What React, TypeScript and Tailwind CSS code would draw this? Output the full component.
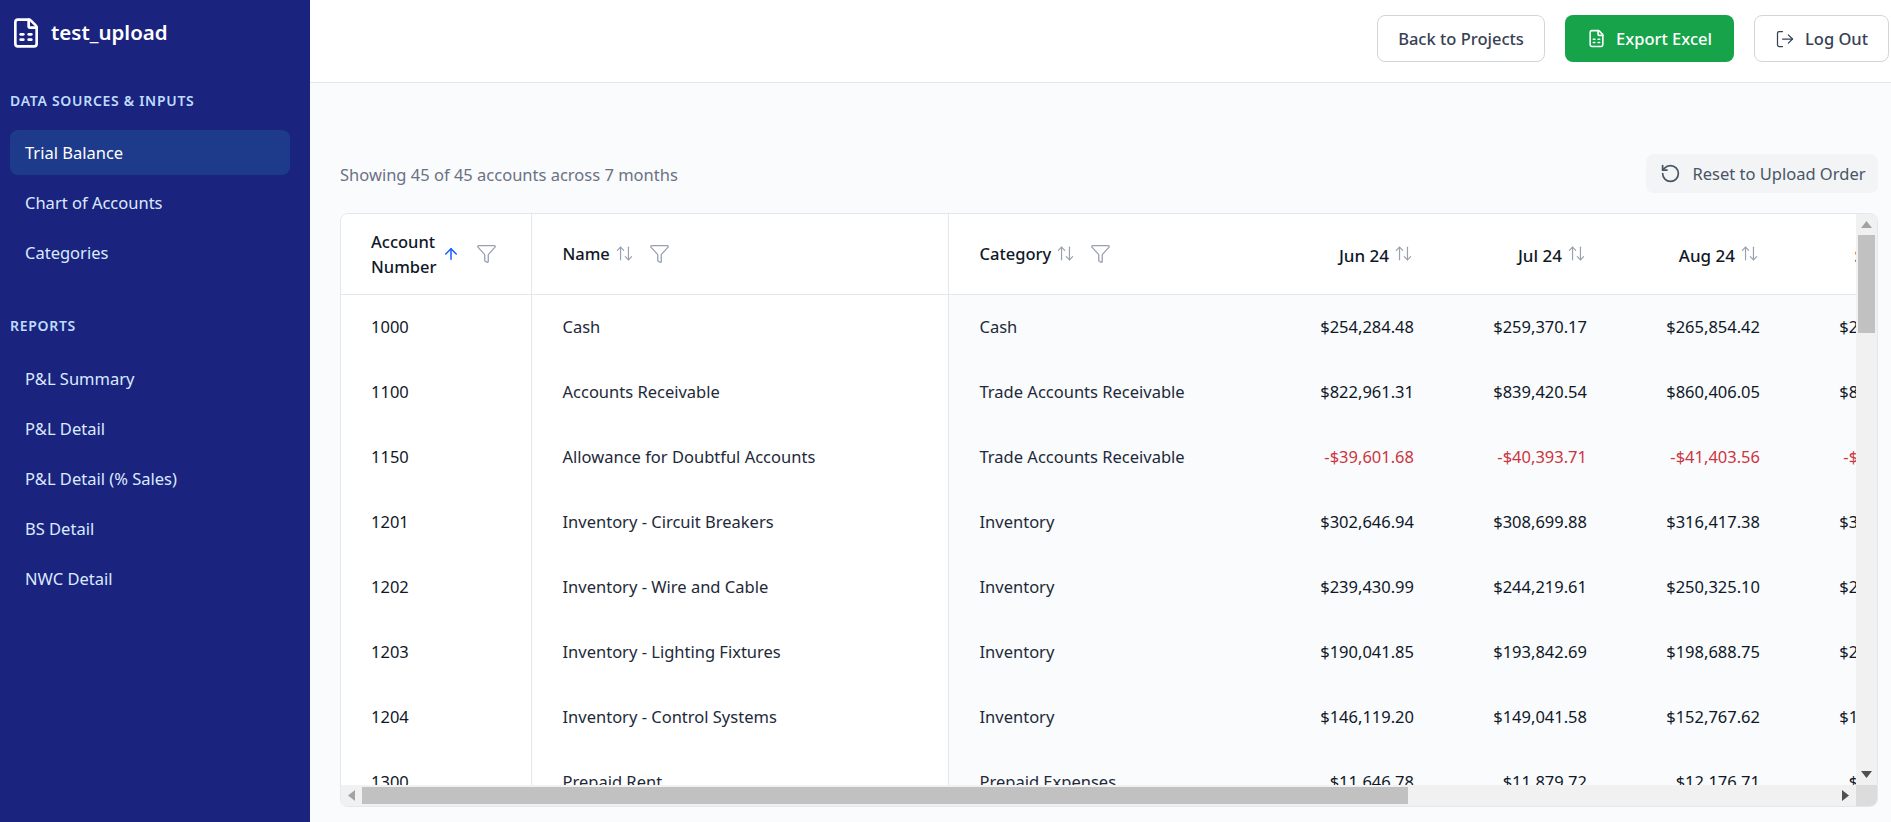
import { ArrowUp, ArrowUpDown, FileSpreadsheet, Filter, LogOut, RotateCcw } from "lucide-react";

const inputs = ["Trial Balance", "Chart of Accounts", "Categories"];
const reports = ["P&L Summary", "P&L Detail", "P&L Detail (% Sales)", "BS Detail", "NWC Detail"];

const rows = [
  ["1000", "Cash", "Cash", "$254,284.48", "$259,370.17", "$265,854.42", "$271,171.51"],
  ["1100", "Accounts Receivable", "Trade Accounts Receivable", "$822,961.31", "$839,420.54", "$860,406.05", "$877,614.17"],
  ["1150", "Allowance for Doubtful Accounts", "Trade Accounts Receivable", "-$39,601.68", "-$40,393.71", "-$41,403.56", "-$42,231.63"],
  ["1201", "Inventory - Circuit Breakers", "Inventory", "$302,646.94", "$308,699.88", "$316,417.38", "$322,745.73"],
  ["1202", "Inventory - Wire and Cable", "Inventory", "$239,430.99", "$244,219.61", "$250,325.10", "$255,331.60"],
  ["1203", "Inventory - Lighting Fixtures", "Inventory", "$190,041.85", "$193,842.69", "$198,688.75", "$202,662.53"],
  ["1204", "Inventory - Control Systems", "Inventory", "$146,119.20", "$149,041.58", "$152,767.62", "$155,822.97"],
  ["1300", "Prepaid Rent", "Prepaid Expenses", "$11,646.78", "$11,879.72", "$12,176.71", "$12,420.24"],
];

const NavItem = ({ label, active }: { label: string; active?: boolean }) => (
  <div className={`flex h-[45px] items-center rounded-lg pl-[15px] pt-[2px] text-[16.5px] ${active ? "bg-[#1e3a8a] text-white" : "text-[#dbeafe]"}`}>
    {label}
  </div>
);

const SortIcon = () => <ArrowUpDown className="h-[19px] w-[19px] shrink-0 text-gray-400" strokeWidth={1.5} />;
const FilterIcon = () => <Filter className="h-[21px] w-[21px] shrink-0 text-gray-400" strokeWidth={1.5} />;

const MonthHead = ({ label }: { label: string }) => (
  <th className="pr-[31px] font-medium">
    <div className="flex items-center justify-end gap-[5px]">
      <span className="pt-[3px] text-[17px]">{label}</span>
      <SortIcon />
    </div>
  </th>
);

export default function App() {
  return (
    <div className="flex h-[822px] w-[1891px] overflow-hidden bg-[#f9fbfd] font-['Noto_Sans',sans-serif]">
      <aside className="flex w-[310px] shrink-0 flex-col bg-[#1a237e] px-[10px]">
        <div className="flex h-[66px] items-center gap-[9px] text-white">
          <FileSpreadsheet className="h-8 w-8" strokeWidth={2} />
          <span className="pb-[2px] text-[20.5px] font-semibold">test_upload</span>
        </div>
        <div className="mt-[24px] text-[14px] font-semibold tracking-[0.7px] text-[#bfdbfe]">DATA SOURCES &amp; INPUTS</div>
        <nav className="mt-[19px] flex w-[280px] flex-col gap-[5px]">
          {inputs.map((item, i) => (
            <NavItem key={item} label={item} active={i === 0} />
          ))}
        </nav>
        <div className="mt-[40px] text-[14px] font-semibold tracking-[0.7px] text-[#bfdbfe]">REPORTS</div>
        <nav className="mt-[20px] flex w-[280px] flex-col gap-[5px]">
          {reports.map((item) => (
            <NavItem key={item} label={item} />
          ))}
        </nav>
      </aside>

      <main className="flex min-w-0 flex-1 flex-col">
        <header className="flex h-[83px] shrink-0 items-start justify-end gap-[20px] border-b border-gray-200 bg-white pr-[2px] pt-[15px]">
          <button className="h-[47px] w-[168px] rounded-lg border border-gray-300 bg-white pt-[2px] text-[16.5px] font-medium text-gray-700">
            Back to Projects
          </button>
          <button className="flex h-[47px] w-[169px] items-center justify-center gap-[10px] rounded-lg bg-[#16a34a] text-[16.5px] font-medium text-white">
            <FileSpreadsheet className="h-[19px] w-[19px]" />
            <span className="pt-[2px]">Export Excel</span>
          </button>
          <button className="flex h-[47px] w-[135px] items-center justify-center gap-[10px] rounded-lg border border-gray-300 bg-white text-[16.5px] font-medium text-gray-700">
            <LogOut className="h-5 w-5" strokeWidth={1.5} />
            <span className="pt-[2px]">Log Out</span>
          </button>
        </header>

        <section className="flex min-h-0 flex-1 flex-col pl-[30px] pr-[13px] pt-[71px]">
          <div className="flex h-[39px] items-center justify-between">
            <p className="pt-[3px] text-[16.5px] text-gray-500">Showing 45 of 45 accounts across 7 months</p>
            <button className="flex h-[39px] w-[232px] items-center justify-center gap-[11px] rounded-lg bg-gray-100 pl-[2px] text-[16.5px] text-gray-600">
              <RotateCcw className="h-[21px] w-[21px]" strokeWidth={2} />
              <span className="pt-[2px]">Reset to Upload Order</span>
            </button>
          </div>

          <div className="mt-[20px] grid h-[594px] grid-cols-[1fr_21px] grid-rows-[1fr_21px] overflow-hidden rounded-lg border border-gray-200 bg-white">
            <div className="min-h-0 min-w-0 overflow-hidden">
              <table className="w-[1622px] table-fixed border-collapse text-left text-[16.5px] text-gray-900">
                <colgroup>
                  <col className="w-[190px]" />
                  <col className="w-[417px]" />
                  <col className="w-[323px]" />
                  <col className="w-[173px]" />
                  <col className="w-[173px]" />
                  <col className="w-[173px]" />
                  <col className="w-[173px]" />
                </colgroup>
                <thead>
                  <tr className="h-[80px] border-b border-gray-200 bg-white">
                    <th className="border-r border-gray-200 pl-[30px] font-medium">
                      <div className="flex items-center">
                        <span className="leading-[25px]">Account<br />Number</span>
                        <ArrowUp className="ml-[6px] h-[18px] w-[18px] text-blue-600" strokeWidth={2} />
                        <span className="ml-[16px]"><FilterIcon /></span>
                      </div>
                    </th>
                    <th className="border-r border-gray-200 pl-[31px] font-medium">
                      <div className="flex items-center gap-[5px]">
                        <span className="pt-[2px]">Name</span>
                        <SortIcon />
                        <span className="ml-[10px]"><FilterIcon /></span>
                      </div>
                    </th>
                    <th className="pl-[31px] font-medium">
                      <div className="flex items-center gap-[5px]">
                        <span className="pt-[2px]">Category</span>
                        <SortIcon />
                        <span className="ml-[10px]"><FilterIcon /></span>
                      </div>
                    </th>
                    <MonthHead label="Jun 24" />
                    <MonthHead label="Jul 24" />
                    <MonthHead label="Aug 24" />
                    <MonthHead label="Sep 24" />
                  </tr>
                </thead>
                <tbody>
                  {rows.map((row) => (
                    <tr key={row[0]} className="h-[65px]">
                      <td className="border-r border-gray-200 bg-white pl-[30px] pt-[2px]">{row[0]}</td>
                      <td className="border-r border-gray-200 bg-white pl-[31px] pt-[2px] text-gray-800">{row[1]}</td>
                      <td className="bg-[#f9fbfd] pl-[31px] pt-[2px] text-gray-800">{row[2]}</td>
                      {row.slice(3).map((value, i) => (
                        <td key={i} className={`bg-[#f9fbfd] pr-[30px] pt-[2px] text-right ${value.startsWith("-") ? "text-[#cc3540]" : ""}`}>
                          {value}
                        </td>
                      ))}
                    </tr>
                  ))}
                </tbody>
              </table>
            </div>

            <div className="flex flex-col items-center bg-[#f1f1f1]">
              <div className="flex h-[21px] items-center justify-center">
                <svg width="11" height="7" viewBox="0 0 11 7"><path d="M5.5 0 11 7H0z" fill="#a3a3a3" /></svg>
              </div>
              <div className="min-h-0 flex-1">
                <div className="h-[98px] w-[17px] bg-[#c1c1c1]" />
              </div>
              <div className="flex h-[21px] items-center justify-center">
                <svg width="11" height="7" viewBox="0 0 11 7"><path d="M0 0h11L5.5 7z" fill="#505050" /></svg>
              </div>
            </div>

            <div className="flex items-center bg-[#f1f1f1]">
              <div className="flex h-full w-[21px] shrink-0 items-center justify-center">
                <svg width="7" height="11" viewBox="0 0 7 11"><path d="M7 0v11L0 5.5z" fill="#a3a3a3" /></svg>
              </div>
              <div className="min-w-0 flex-1">
                <div className="h-[17px] w-[1046px] bg-[#c1c1c1]" />
              </div>
              <div className="flex h-full w-[21px] shrink-0 items-center justify-center">
                <svg width="7" height="11" viewBox="0 0 7 11"><path d="M0 0v11l7-5.5z" fill="#505050" /></svg>
              </div>
            </div>
            <div className="bg-[#dcdcdc]" />
          </div>
        </section>
      </main>
    </div>
  );
}
